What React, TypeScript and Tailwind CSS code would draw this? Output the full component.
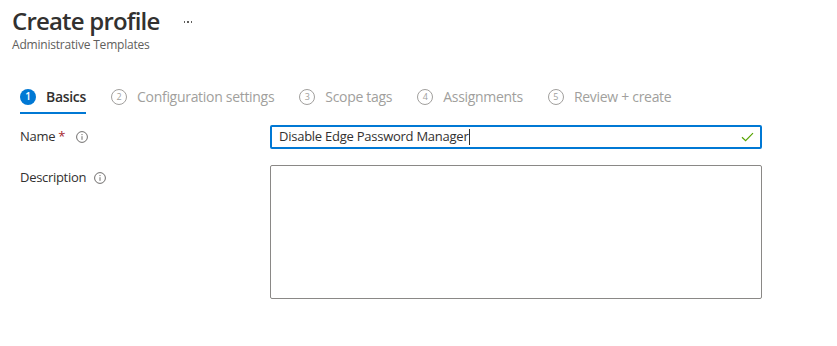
import React from 'react';

const steps = [
  { n: 1, label: 'Basics', active: true },
  { n: 2, label: 'Configuration settings' },
  { n: 3, label: 'Scope tags' },
  { n: 4, label: 'Assignments' },
  { n: 5, label: 'Review + create' },
];

function InfoIcon() {
  return (
    <svg width="12" height="12" viewBox="0 0 12 12" className="shrink-0">
      <circle cx="6" cy="6" r="5.4" fill="none" stroke="#605e5c" strokeWidth="0.9" />
      <circle cx="6" cy="3.6" r="0.6" fill="#605e5c" />
      <line x1="6" y1="5.2" x2="6" y2="8.8" stroke="#605e5c" strokeWidth="0.9" />
    </svg>
  );
}

export default function App() {
  return (
    <div className="w-[837px] h-[346px] bg-white text-[#323130] overflow-hidden" style={{ fontFamily: '"Segoe UI", "Open Sans", sans-serif' }}>
      <header className="pl-3 pt-[5px]">
        <div className="flex items-center gap-[24px]">
          <h1 className="text-[24px] leading-[32px] font-semibold tracking-[-0.8px]">Create profile</h1>
          <span className="flex gap-[2px] mt-[2px]">
            <span className="w-[1.5px] h-[1.5px] bg-[#605e5c]" />
            <span className="w-[1.5px] h-[1.5px] bg-[#605e5c]" />
            <span className="w-[1.5px] h-[1.5px] bg-[#605e5c]" />
          </span>
        </div>
        <p className="text-[12px] leading-[16px] text-[#605e5c] tracking-[-0.2px]">Administrative Templates</p>
      </header>

      <nav className="flex items-center pl-5 mt-[28px] gap-[25px]">
        {steps.map(s => (
          <div key={s.n} className={`flex items-center gap-[10px] h-[33px] border-b-2 ${s.active ? 'border-[#0078d4]' : 'border-transparent'}`}>
            {s.active ? (
              <span className="w-4 h-4 rounded-full bg-[#0078d4] text-white text-[10px] font-semibold flex items-center justify-center">{s.n}</span>
            ) : (
              <span className="w-4 h-4 rounded-full border border-[#a19f9d] text-[#a19f9d] text-[9px] flex items-center justify-center">{s.n}</span>
            )}
            <span className={`text-[14px] tracking-[-0.3px] ${s.active ? 'text-[#323130] font-semibold' : 'text-[#a19f9d]'}`}>{s.label}</span>
          </div>
        ))}
      </nav>

      <div className="pl-5 mt-[11px] flex flex-col gap-[16px]">
        <div className="flex items-center">
          <div className="w-[250px] flex items-center text-[13px]">
            <span className="tracking-[-0.3px]">Name</span>
            <span className="text-[#a4262c] ml-[3px]">*</span>
            <span className="ml-[11px] flex"><InfoIcon /></span>
          </div>
          <div className="w-[492px] h-[24px] border-2 border-[#0078d4] rounded-[2px] flex items-center pl-[7px] pr-[6px]">
            <span className="text-[13px] tracking-[-0.25px]">Disable Edge Password Manager</span>
            <span className="w-px h-[16px] bg-[#323130] ml-[1px]" />
            <svg width="13" height="10" viewBox="0 0 13 10" className="ml-auto">
              <path d="M1 5.2 L4.6 8.6 L12 1.2" fill="none" stroke="#57a300" strokeWidth="1.2" />
            </svg>
          </div>
        </div>
        <div className="flex items-start">
          <div className="w-[250px] flex items-center text-[13px] pt-[3px]">
            <span className="tracking-[-0.3px]">Description</span>
            <span className="ml-[8px] flex"><InfoIcon /></span>
          </div>
          <div className="w-[492px] h-[134px] border border-[#8a8886] rounded-[2px]" />
        </div>
      </div>
    </div>
  );
}
